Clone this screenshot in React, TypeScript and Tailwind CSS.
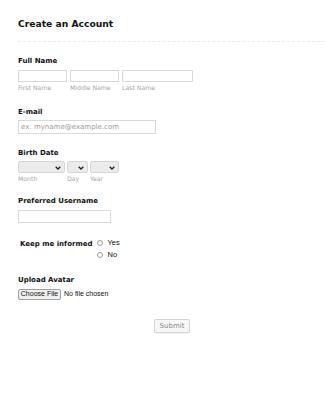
import React from "react";

const Chevron = () => (
  <svg width="6" height="4" viewBox="0 0 6 4" className="absolute right-[3px] top-[4px]">
    <path d="M0.7 0.7 L3 3 L5.3 0.7" fill="none" stroke="#222" strokeWidth="1.3" />
  </svg>
);

const Select = ({ w }: { w: string }) => (
  <div className={`relative h-[12px] ${w} rounded-[2px] border border-[#d6d6d6] bg-[#ebebeb]`}>
    <Chevron />
  </div>
);

const Radio = () => (
  <span className="inline-block h-[6px] w-[6px] rounded-full border border-[#9a9a9a] bg-white" />
);

const Sub = ({ children }: { children: React.ReactNode }) => (
  <span className="mt-[2px] text-[6.2px] leading-[7px] text-[#a5a5a5]">{children}</span>
);

export default function App() {
  return (
    <div
      className="h-[400px] w-[325px] bg-white text-[#111]"
      style={{ fontFamily: '"DejaVu Sans", Verdana, sans-serif' }}
    >
      <div className="pl-[18px] pt-[17px]">
        <h1 className="text-[9.2px] font-bold leading-[14px]">Create an Account</h1>
        <div className="mt-[10px] border-t border-dashed border-[#ececec]" />

        {/* Full name */}
        <div className="mt-[14px] text-[7px] font-bold leading-[10px]">Full Name</div>
        <div className="mt-[4px] flex gap-[2px]">
          <div className="flex w-[49px] flex-col">
            <div className="h-[12px] border border-[#d9d9d9]" />
            <Sub>First Name</Sub>
          </div>
          <div className="ml-[1px] flex w-[49px] flex-col">
            <div className="h-[12px] border border-[#d9d9d9]" />
            <Sub>Middle Name</Sub>
          </div>
          <div className="ml-[1px] flex w-[71px] flex-col">
            <div className="h-[12px] border border-[#d9d9d9]" />
            <Sub>Last Name</Sub>
          </div>
        </div>

        {/* Email */}
        <div className="mt-[16px] text-[7px] font-bold leading-[10px]">E-mail</div>
        <div className="mt-[3px] flex h-[14px] w-[138px] items-center border border-[#d9d9d9] pl-[2px] text-[7px] text-[#9a9a9a]">
          ex: myname@example.com
        </div>

        {/* Birth date */}
        <div className="mt-[14px] text-[7px] font-bold leading-[10px]">Birth Date</div>
        <div className="mt-[3px] flex gap-[2px]">
          <div className="flex w-[47px] flex-col">
            <Select w="w-[47px]" />
            <Sub>Month</Sub>
          </div>
          <div className="flex w-[21px] flex-col">
            <Select w="w-[21px]" />
            <Sub>Day</Sub>
          </div>
          <div className="flex w-[29px] flex-col">
            <Select w="w-[29px]" />
            <Sub>Year</Sub>
          </div>
        </div>

        {/* Username */}
        <div className="mt-[14px] text-[7px] font-bold leading-[10px]">Preferred Username</div>
        <div className="mt-[4px] h-[13px] w-[93px] border border-[#d9d9d9]" />

        {/* Keep me informed */}
        <div className="mt-[15px] flex pl-[2px]">
          <div className="pt-[1px] text-[7px] font-bold leading-[10px]">Keep me informed</div>
          <div
            className="ml-[5px] flex flex-col gap-[2px] text-[7.5px] leading-[10px]"
            style={{ fontFamily: '"Liberation Sans", Arial, sans-serif' }}
          >
            <label className="flex items-center gap-[4px]"><Radio />Yes</label>
            <label className="flex items-center gap-[4px]"><Radio />No</label>
          </div>
        </div>

        {/* Upload */}
        <div className="mt-[15px] text-[7px] font-bold leading-[10px]">Upload Avatar</div>
        <div className="mt-[4px] flex items-center" style={{ fontFamily: '"Liberation Sans", Arial, sans-serif' }}>
          <span className="flex h-[11px] w-[43px] items-center justify-center rounded-[2px] border border-[#a0a0a0] bg-[#efefef] text-[7px] text-[#111]">
            Choose File
          </span>
          <span className="ml-[3px] text-[7px] text-[#111]">No file chosen</span>
        </div>

        {/* Submit */}
        <div className="mt-[19px] pl-[136px]">
          <span className="flex h-[14px] w-[36px] items-center justify-center rounded-[2px] border border-[#d4d4d4] bg-[#f7f7f7] text-[7px] text-[#888] shadow-[0_1px_1px_rgba(0,0,0,0.06)]">
            Submit
          </span>
        </div>
      </div>
    </div>
  );
}
